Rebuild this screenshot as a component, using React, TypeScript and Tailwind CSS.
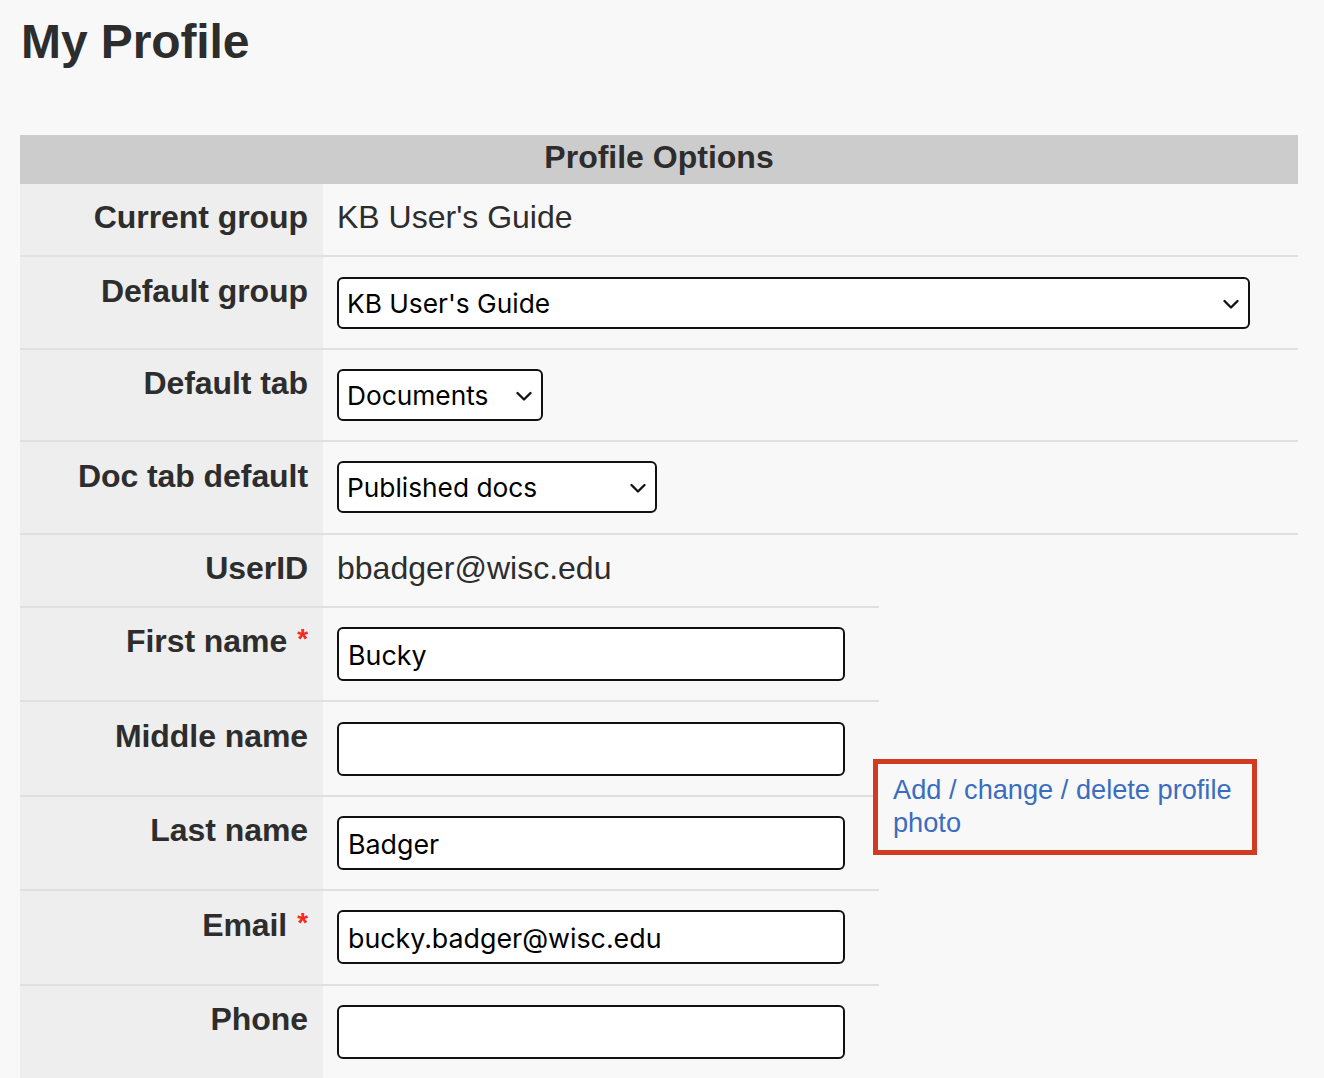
import React from "react";

const font = { fontFamily: '"Liberation Sans", Arial, sans-serif' };
const ctl = { fontFamily: 'Inter, "Liberation Sans", sans-serif' };

function Chevron() {
  return (
    <svg
      className="pointer-events-none absolute right-[11px] top-[calc(50%+0.5px)] -translate-y-1/2"
      width="16"
      height="11"
      viewBox="0 0 16 11"
      fill="none"
    >
      <path d="M1.5 2.5 L8 9 L14.5 2.5" stroke="#111" strokeWidth="2.3" strokeLinecap="round" strokeLinejoin="round" />
    </svg>
  );
}

function Select({ value, className }: { value: string; className: string }) {
  return (
    <div className={`relative h-[52px] ${className}`}>
      <select
        defaultValue={value}
        style={ctl}
        className="block h-full w-full appearance-none rounded-[6px] border-2 border-[#111] bg-white pl-[8px] pt-[2px] text-[26.3px] leading-none text-black"
      >
        <option>{value}</option>
      </select>
      <Chevron />
    </div>
  );
}

function Input({ value }: { value: string }) {
  return (
    <input
      readOnly
      value={value}
      style={ctl}
      className="block h-[54px] w-[508px] rounded-[6px] border-2 border-[#111] bg-white px-[9px] pt-[2px] text-[26.8px] text-black"
    />
  );
}

function Row({
  label,
  req,
  children,
  rowClass,
  labelClass,
  valueClass,
}: {
  label: string;
  req?: boolean;
  children: React.ReactNode;
  rowClass: string;
  labelClass: string;
  valueClass: string;
}) {
  return (
    <div className={`flex border-b-2 border-[#e0e0e0] ${rowClass}`}>
      <div className={`w-[303px] shrink-0 bg-[#eeeeee] pr-[15px] text-right text-[32px] font-bold leading-[36px] tracking-[-0.07px] text-[#2d2d2d] ${labelClass}`}>
        {label}
        {req && <span className="ml-[10px] align-[4px] text-[28px] leading-none text-[#f02d1f]">*</span>}
      </div>
      <div className={`min-w-0 flex-1 pl-[14px] ${valueClass}`}>{children}</div>
    </div>
  );
}

export default function App() {
  return (
    <div className="relative h-[1078px] overflow-hidden bg-[#f8f8f8] pl-[20px] pr-[26px]" style={font}>
      <h1 className="ml-[1px] h-[135px] pt-[14px] text-[48px] font-bold leading-[56px] tracking-[-0.1px] text-[#2d2d2d]">My Profile</h1>

      <div className="h-[49px] bg-[#cccccc] text-center text-[32px] font-bold leading-[44px] text-[#2d2d2d]">
        Profile Options
      </div>

      <Row label="Current group" rowClass="h-[73px]" labelClass="pt-[15px]" valueClass="pt-[15px] text-[32px] leading-[36px] text-[#2d2d2d]">
        KB User's Guide
      </Row>
      <Row label="Default group" rowClass="h-[93px]" labelClass="pt-[16px]" valueClass="pt-[20px]">
        <Select value="KB User's Guide" className="w-[913px]" />
      </Row>
      <Row label="Default tab" rowClass="h-[92px]" labelClass="pt-[15px]" valueClass="pt-[19px]">
        <Select value="Documents" className="w-[206px]" />
      </Row>
      <Row label="Doc tab default" rowClass="h-[93px]" labelClass="pt-[16px]" valueClass="pt-[19px]">
        <Select value="Published docs" className="w-[320px]" />
      </Row>

      <div className="w-[859px]">
        <Row label="UserID" rowClass="h-[73px]" labelClass="pt-[15px]" valueClass="pt-[15px] text-[32px] leading-[36px] text-[#2d2d2d]">
          bbadger@wisc.edu
        </Row>
        <Row label="First name" req rowClass="h-[94px]" labelClass="pt-[15px]" valueClass="pt-[19px]">
          <Input value="Bucky" />
        </Row>
        <Row label="Middle name" rowClass="h-[95px]" labelClass="pt-[16px]" valueClass="pt-[20px]">
          <Input value="" />
        </Row>
        <Row label="Last name" rowClass="h-[94px]" labelClass="pt-[15px]" valueClass="pt-[19px]">
          <Input value="Badger" />
        </Row>
        <Row label="Email" req rowClass="h-[95px]" labelClass="pt-[16px]" valueClass="pt-[19px]">
          <Input value="bucky.badger@wisc.edu" />
        </Row>
        <Row label="Phone" rowClass="h-[94px]" labelClass="pt-[15px]" valueClass="pt-[19px]">
          <Input value="" />
        </Row>
      </div>

      <div className="absolute left-[873px] top-[759px] h-[96px] w-[384px] border-[5px] border-[#d13b22] bg-[#f8f8f8] pl-[15px] pt-[9px] text-[27.2px] leading-[33px] text-[#3a6dbf]">
        <a>Add / change / delete profile photo</a>
      </div>
    </div>
  );
}
